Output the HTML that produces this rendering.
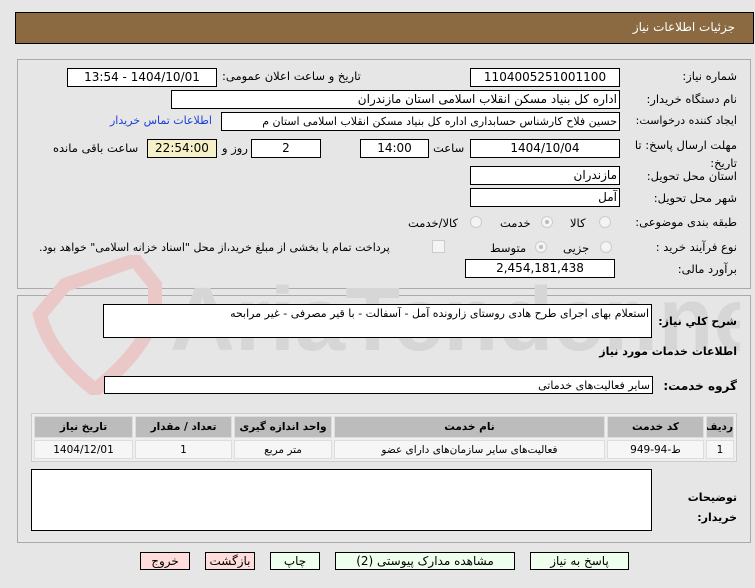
<!DOCTYPE html>
<html><head><meta charset="utf-8"><style>
body{margin:0;width:755px;height:588px;background:#e6e6e6;font-family:"DejaVu Sans","Noto Sans CJK SC",sans-serif;font-size:11px;position:relative;overflow:hidden;color:#000}
.a{position:absolute}
.f{position:absolute;background:#fff;border:1px solid #000;box-sizing:border-box;direction:rtl;text-align:center;line-height:17px;font-size:12px;white-space:nowrap;overflow:hidden}
.l{position:absolute;direction:rtl;white-space:nowrap;font-size:11.5px}
.r{position:absolute;width:12px;height:12px;border-radius:50%;border:1px solid #ccc;background:#f4f4f4;box-sizing:border-box}
.r.on::after{content:"";position:absolute;left:3px;top:3px;width:4px;height:4px;border-radius:50%;background:#bbb}
.b{position:absolute;top:552px;height:18px;border:1px solid #000;box-sizing:border-box;text-align:center;line-height:16px;font-size:12px;direction:rtl}
td{border:1px solid #ddd;white-space:nowrap;padding:0;overflow:hidden}
</style></head><body>
<div class="a" style="left:15px;top:12px;width:739px;height:32px;background:#8b6a42;border:1px solid #000;box-sizing:border-box"></div>
<div class="l" style="right:20px;top:20px;color:#fff;font-size:12px">جزئیات اطلاعات نیاز</div>

<div class="a" style="left:17px;top:59px;width:734px;height:230px;border:1px solid #aaa;box-sizing:border-box"></div>
<div class="a" style="left:17px;top:295px;width:734px;height:248px;border:1px solid #aaa;box-sizing:border-box"></div>

<svg class="a" style="left:20px;top:255px" width="720" height="140" viewBox="0 0 720 140">
<path d="M45 30 L115 5 L135 30 L135 60 Q120 100 75 135 Q30 100 20 60 Z" fill="none" stroke="#ebc8c8" stroke-width="14"/>
<text x="150" y="95" font-family="Liberation Sans" font-size="90" font-weight="bold" fill="#d6d6d6">AriaTender.net</text>
</svg>

<div class="l" style="right:18px;top:69px">شماره نیاز:</div>
<div class="f" style="left:470px;top:68px;width:150px;height:19px">1104005251001100</div>
<div class="l" style="left:222px;top:69px">تاریخ و ساعت اعلان عمومی:</div>
<div class="f" style="left:67px;top:68px;width:150px;height:19px">1404/10/01 - 13:54</div>

<div class="l" style="right:18px;top:92px">نام دستگاه خریدار:</div>
<div class="f" style="left:171px;top:90px;width:449px;height:19px;text-align:right;padding-right:2px">اداره کل بنیاد مسکن انقلاب اسلامی استان مازندران</div>

<div class="l" style="right:18px;top:114px;font-size:11px">ایجاد کننده درخواست:</div>
<div class="f" style="left:221px;top:112px;width:399px;height:19px;text-align:right;padding-right:2px;font-size:11px">حسین فلاح کارشناس حسابداری اداره کل بنیاد مسکن انقلاب اسلامی استان م</div>
<div class="l" style="left:110px;top:114px;color:#1a3fd8;font-size:11px">اطلاعات تماس خریدار</div>

<div class="l" style="right:18px;top:136px;line-height:18px;text-align:right">مهلت ارسال پاسخ: تا<br>تاریخ:</div>
<div class="f" style="left:470px;top:139px;width:150px;height:19px">1404/10/04</div>
<div class="l" style="left:433px;top:141px">ساعت</div>
<div class="f" style="left:360px;top:139px;width:69px;height:19px">14:00</div>
<div class="f" style="left:251px;top:139px;width:70px;height:19px">2</div>
<div class="l" style="left:222px;top:141px">روز و</div>
<div class="f" style="left:147px;top:139px;width:70px;height:19px;background:#f5f0c8">22:54:00</div>
<div class="l" style="left:53px;top:141px">ساعت باقی مانده</div>

<div class="l" style="right:18px;top:169px">استان محل تحویل:</div>
<div class="f" style="left:470px;top:166px;width:150px;height:19px;text-align:right;padding-right:2px">مازندران</div>
<div class="l" style="right:18px;top:191px">شهر محل تحویل:</div>
<div class="f" style="left:470px;top:188px;width:150px;height:19px;text-align:right;padding-right:2px">آمل</div>

<div class="l" style="right:18px;top:215px">طبقه بندی موضوعی:</div>
<div class="r" style="left:599px;top:216px"></div><div class="l" style="left:570px;top:216px">کالا</div>
<div class="r on" style="left:541px;top:216px"></div><div class="l" style="left:500px;top:216px">خدمت</div>
<div class="r" style="left:470px;top:216px"></div><div class="l" style="left:408px;top:216px">کالا/خدمت</div>

<div class="l" style="right:18px;top:240px">نوع فرآیند خرید :</div>
<div class="r" style="left:600px;top:241px"></div><div class="l" style="left:563px;top:241px">جزیی</div>
<div class="r on" style="left:535px;top:241px"></div><div class="l" style="left:490px;top:241px">متوسط</div>
<div class="a" style="left:432px;top:240px;width:11px;height:11px;border:1px solid #ccc;background:#f4f4f4"></div>
<div class="l" style="left:39px;top:241px;font-size:11px">پرداخت تمام یا بخشی از مبلغ خرید،از محل "اسناد خزانه اسلامی" خواهد بود.</div>

<div class="l" style="right:18px;top:262px">برآورد مالی:</div>
<div class="f" style="left:465px;top:259px;width:150px;height:19px">2,454,181,438</div>

<div class="l" style="right:18px;top:315px;font-weight:bold;font-size:11px">شرح کلي نیاز:</div>
<div class="f" style="left:103px;top:304px;width:549px;height:34px;text-align:right;padding-right:2px;font-size:11px">استعلام بهای اجرای طرح هادی روستای زارونده آمل - آسفالت - با قیر مصرفی - غیر مرابحه</div>
<div class="l" style="right:18px;top:345px;font-weight:bold;font-size:11px">اطلاعات خدمات مورد نیاز</div>
<div class="l" style="right:18px;top:379px;font-weight:bold;font-size:12px">گروه خدمت:</div>
<div class="f" style="left:104px;top:376px;width:549px;height:18px;text-align:right;padding-right:2px;font-size:11px">سایر فعالیت‌های خدماتی</div>

<table class="a" style="left:31px;top:413px;width:706px;border-collapse:separate;border-spacing:2px;background:#eee;border:1px solid #ccc;direction:rtl;font-size:10.5px;text-align:center;table-layout:fixed">
<tr style="background:#bcbcbc;font-weight:bold;height:22px"><td style="width:26px">ردیف</td><td style="width:95px">کد خدمت</td><td>نام خدمت</td><td style="width:96px">واحد اندازه گیری</td><td style="width:95px">تعداد / مقدار</td><td style="width:97px">تاریخ نیاز</td></tr>
<tr style="background:#f6f6f6;height:19px"><td>1</td><td>ط-94-949</td><td>فعالیت‌های سایر سازمان‌های دارای عضو</td><td>متر مربع</td><td>1</td><td>1404/12/01</td></tr>
</table>

<div class="l" style="right:18px;top:488px;font-weight:bold;line-height:20px;text-align:right;font-size:11px">توضیحات<br>خریدار:</div>
<div class="f" style="left:31px;top:469px;width:621px;height:62px"></div>

<div class="b" style="left:140px;width:50px;background:#fdd">خروج</div>
<div class="b" style="left:205px;width:50px;background:#fdd">بازگشت</div>
<div class="b" style="left:270px;width:50px;background:#efe">چاپ</div>
<div class="b" style="left:335px;width:180px;background:#efe">مشاهده مدارک پیوستی (2)</div>
<div class="b" style="left:530px;width:99px;background:#efe">پاسخ به نیاز</div>
</body></html>
